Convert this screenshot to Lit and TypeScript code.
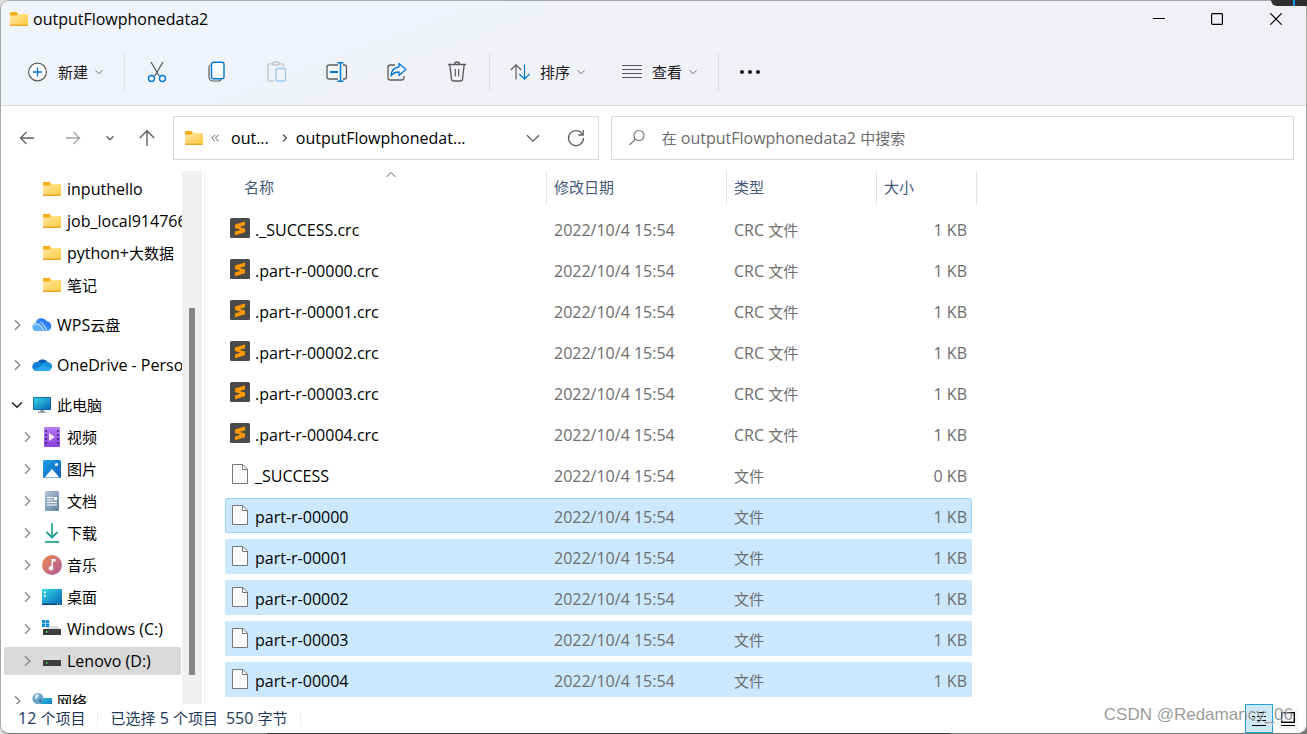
import { LitElement, html, css, svg, nothing, TemplateResult } from "lit";
import { customElement, state } from "lit/decorators.js";
import { classMap } from "lit/directives/class-map.js";

const BLUE = "#0078d4";
const INK = "#5c5c5c";

/** Sets runs of Chinese characters one pixel smaller than the Latin text round them. */
const mixed = (text: string) =>
  text
    .split(/([\u4e00-\u9fff]+)/)
    .filter((run) => run)
    .map((run) => (/[\u4e00-\u9fff]/.test(run) ? html`<span class="cjk">${run}</span>` : run));

const icon = (w: number, h: number, body: unknown, cls = "") =>
  html`<svg class=${cls} width=${w} height=${h} viewBox="0 0 ${w} ${h}" fill="none" aria-hidden="true">${body}</svg>`;

const chevronDown = (w = 10, stroke = "#6a6a6a", sw = 1) =>
  html`<svg width=${w} height=${w} viewBox="0 0 10 10" fill="none" aria-hidden="true">
    <path d="M1.5 3.3 5 6.8 8.5 3.3" stroke=${stroke} stroke-width=${sw} />
  </svg>`;

const gradients = svg`
  <linearGradient id="fold" x1="0" y1="0" x2="1" y2="1"><stop stop-color="#ffe9a6"/><stop offset="1" stop-color="#ffc83a"/></linearGradient>
  <linearGradient id="screen" x1="0" y1="0" x2="1" y2="1"><stop stop-color="#2fd8e6"/><stop offset="1" stop-color="#0a63b8"/></linearGradient>
  <linearGradient id="video" x1="0" y1="0" x2="0" y2="1"><stop stop-color="#b57bf5"/><stop offset="1" stop-color="#8a3fe0"/></linearGradient>
  <linearGradient id="pic" x1="0" y1="0" x2="1" y2="1"><stop stop-color="#1ba0ea"/><stop offset="1" stop-color="#0a5fb4"/></linearGradient>
  <linearGradient id="doc" x1="0" y1="0" x2="1" y2="1"><stop stop-color="#b4c6da"/><stop offset="1" stop-color="#5f7f9f"/></linearGradient>
  <linearGradient id="down" x1="0" y1="0" x2="1" y2="1"><stop stop-color="#3bc585"/><stop offset="1" stop-color="#10939b"/></linearGradient>
  <linearGradient id="music" x1="0" y1="0" x2="1" y2="1"><stop stop-color="#f08a4c"/><stop offset="1" stop-color="#a8589f"/></linearGradient>
  <linearGradient id="wps" x1="0" y1="1" x2="1" y2="0"><stop stop-color="#69b7ff"/><stop offset="1" stop-color="#1163f0"/></linearGradient>`;

const withDefs = (body: unknown) => svg`<defs>${gradients}</defs>${body}`;

const folder = () =>
  icon(18, 16, withDefs(svg`
    <path d="M0 2a1 1 0 0 1 1-1h5.5l1.5 2v3H0z" fill="#f5ad13"/>
    <path d="M0 4.5h6.5L8 3h10v11a1 1 0 0 1-1 1H1a1 1 0 0 1-1-1z" fill="url(#fold)"/>
    <path d="M0 13.5h18v.5a1 1 0 0 1-1 1H1a1 1 0 0 1-1-1z" fill="#e8a72b"/>`));

const drive = (y: number) => svg`
  <path d="M3 ${y}h12l3 4.5H0z" fill="#dcdfe2"/>
  <rect y="${y + 4}" width="18" height="6" rx=".5" fill="#3e3e3e"/>
  <rect x="3" y="${y + 6}" width="1.6" height="1.6" fill="#35e04d"/>`;

const sideIcons: Record<string, () => TemplateResult> = {
  folder,
  wps: () =>
    icon(20, 16, withDefs(svg`
      <path d="M4.500 14a4 4 0 0 1-1-7.900A6.200 6.200 0 0 1 14.800 4.200 5 5 0 0 1 15.500 14z" fill="url(#wps)"/>
      <path d="M1 9.500c4-3 6-2 8 0l4 4.500H4.500C2 14 .5 12 1 9.500z" fill="#5fb1ff"/>
      <path d="M8.500 5.500c2 .5 3 2 4.500 4.500l2 3.800" stroke="#fff" stroke-width=".9"/>
      <path d="M1 8.500c3-2.500 6-1.800 8 .500l3 4.500" stroke="#fff" stroke-width=".9"/>`)),
  onedrive: () =>
    icon(20, 16, svg`
      <path d="M5 6a6 6 0 0 1 10.500-1L11 10z" fill="#0a5cb0"/>
      <path d="M4.500 14A4.500 4.500 0 0 1 5 5c2-.3 4 .5 6 2l4 6z" fill="#0f7fd8"/>
      <path d="M15.500 5a4.500 4.500 0 0 1 4.300 6L14 12 9 7.500C11 5.500 13 4.800 15.500 5z" fill="#1490df"/>
      <path d="M2 13c3-2 6-4 9-5 3 1 6 2 8.600 2.800A3.700 3.700 0 0 1 16 14H4.500A4.500 4.500 0 0 1 2 13z" fill="#2ba7ef"/>`),
  pc: () =>
    icon(20, 18, withDefs(svg`
      <rect x="1" y="1" width="18" height="13" rx=".8" fill="#0f5d93"/>
      <rect x="1.800" y="1.800" width="16.400" height="11.400" fill="url(#screen)"/>
      <path d="M8.500 14h3v1.500h2.500v1.300H6v-1.300h2.500z" fill="#7d8b96"/>`)),
  video: () =>
    icon(18, 20, withDefs(svg`
      <rect x="1" width="16" height="20" rx="1.200" fill="url(#video)"/>
      <path d="M2.500 3h1.500v2H2.500zM2.500 7h1.500v2H2.500zM2.500 11h1.500v2H2.500zM2.500 15h1.500v2H2.500zM14 3h1.500v2H14zM14 7h1.500v2H14zM14 11h1.500v2H14zM14 15h1.500v2H14z" fill="#43206f"/>
      <path d="M6 6v8l6-4z" fill="#f3e9ff"/>`)),
  picture: () =>
    icon(18, 18, withDefs(svg`
      <rect width="18" height="18" rx="1.500" fill="url(#pic)"/>
      <path d="M1.500 17.500 9 9l7.500 8.500z" fill="#f5fbff"/>
      <circle cx="13.500" cy="4.500" r="1.600" fill="#fff"/>`)),
  document: () =>
    icon(18, 20, withDefs(svg`
      <rect x="2" width="14" height="20" rx="1.200" fill="url(#doc)"/>
      <path d="M4 6.500h6M4 9h6M4 11.500h10M4 14h10" stroke="#fff" stroke-width="1.100"/>
      <rect x="11" y="6" width="3" height="3.400" fill="#fff"/>`)),
  download: () =>
    icon(18, 20, withDefs(svg`
      <path d="M8.200 0h1.700v14H8.200z" fill="#21ac8c"/>
      <path d="M3.500 9 9 14.500 14.600 9" stroke="#1aa193" stroke-width="1.800"/>
      <rect x="2" y="18" width="14" height="1.800" fill="url(#down)"/>`)),
  music: () =>
    icon(20, 20, withDefs(svg`
      <circle cx="10" cy="10" r="10" fill="url(#music)"/>
      <path d="M9.500 4h4v2.500H11V13H9.500z" fill="#fff"/><circle cx="9" cy="13.200" r="2.200" fill="#fff"/>`)),
  desktop: () =>
    icon(20, 16, withDefs(svg`
      <rect width="20" height="16" rx="1" fill="url(#screen)"/>
      <rect y="14.500" width="20" height="1.500" fill="#0b4778"/>
      <path d="M2 2.500h1.800v1.800H2zM2 6h1.800v1.800H2z" fill="#fff"/>
      <path d="M15 15h1M17.500 15h1" stroke="#fff"/>`)),
  windows: () =>
    icon(20, 18, svg`
      <path d="M6 6h10l3 4H1z" fill="#dcdfe2"/>
      <rect x="1" y="9" width="18" height="6" rx=".5" fill="#3e3e3e"/>
      <rect x="4" y="11" width="1.600" height="1.600" fill="#35e04d"/>
      <path d="M0 0h3.300v3.200H0zM3.900 0h3.300v3.200H3.900zM0 3.800h3.300V7H0zM3.900 3.800h3.300V7H3.900z" fill="#118fdc"/>`),
  drive: () => icon(18, 12, drive(1)),
  network: () =>
    icon(20, 18, withDefs(svg`
      <rect x="4" y="6" width="16" height="11" fill="url(#screen)"/>
      <circle cx="6" cy="6.500" r="5.500" fill="#6ea3c8"/>
      <path d="M3 3.500c2-2 4-1.500 4 0s-2 1.500-2 3.200S2 6 3 3.500z" fill="#d5e9f5"/>
      <path d="M7.500 7.500c2-.5 3 .5 2 2.500-2 1-2.500-.5-2-2.500z" fill="#2f6f9f"/>`)),
};

const sublime = () =>
  icon(20, 20, svg`
    <rect width="20" height="20" rx="1.500" fill="#4a4a4a"/>
    <path d="M5 6.500 15 3.500v3.800L9.500 9l5.500 1.600v3.600L5 17.200v-3.700l5.500-1.700L5 10.100z" fill="#ff9800"/>`);

const blank = () =>
  icon(16, 20, svg`
    <path d="M.5.5h10.300l4.700 4.700v14.300H.5z" fill="#fafafa" stroke="#767676"/>
    <path d="M10.500.5v5h5" stroke="#767676"/>`);

interface SideItem {
  label: string;
  icon: string;
  level: "leaf" | "top" | "child";
  open?: boolean;
  selected?: boolean;
}

const SIDE: SideItem[] = [
  { label: "inputhello", icon: "folder", level: "leaf" },
  { label: "job_local914766", icon: "folder", level: "leaf" },
  { label: "python+大数据", icon: "folder", level: "leaf" },
  { label: "笔记", icon: "folder", level: "leaf" },
  { label: "WPS云盘", icon: "wps", level: "top" },
  { label: "OneDrive - Perso", icon: "onedrive", level: "top" },
  { label: "此电脑", icon: "pc", level: "top", open: true },
  { label: "视频", icon: "video", level: "child" },
  { label: "图片", icon: "picture", level: "child" },
  { label: "文档", icon: "document", level: "child" },
  { label: "下载", icon: "download", level: "child" },
  { label: "音乐", icon: "music", level: "child" },
  { label: "桌面", icon: "desktop", level: "child" },
  { label: "Windows (C:)", icon: "windows", level: "child" },
  { label: "Lenovo (D:)", icon: "drive", level: "child", selected: true },
  { label: "网络", icon: "network", level: "top" },
];

interface FileRow {
  name: string;
  type: string;
  size: string;
}

const crc = (name: string): FileRow => ({ name, type: "CRC 文件", size: "1 KB" });
const plain = (name: string, size = "1 KB"): FileRow => ({ name, type: "文件", size });

const FILES: FileRow[] = [
  crc("._SUCCESS.crc"),
  crc(".part-r-00000.crc"),
  crc(".part-r-00001.crc"),
  crc(".part-r-00002.crc"),
  crc(".part-r-00003.crc"),
  crc(".part-r-00004.crc"),
  plain("_SUCCESS", "0 KB"),
  plain("part-r-00000"),
  plain("part-r-00001"),
  plain("part-r-00002"),
  plain("part-r-00003"),
  plain("part-r-00004"),
];

const tools: { label: string; body: unknown }[] = [
  {
    label: "剪切",
    body: svg`
      <path d="M5 1 13.200 15M17 1 8.800 15" stroke="${INK}" stroke-width="1.300"/>
      <circle cx="5.500" cy="17.500" r="3" stroke="${BLUE}" stroke-width="1.400"/>
      <circle cx="16.500" cy="17.500" r="3" stroke="${BLUE}" stroke-width="1.400"/>`,
  },
  {
    label: "复制",
    body: svg`
      <path d="M4.500 4C3.300 4.500 3 5.200 3 6.500V16a4 4 0 0 0 4 4h5.500c1.300 0 2-.3 2.500-1.500" stroke="${INK}" stroke-width="1.200"/>
      <rect x="5.500" y="1.200" width="12.500" height="16.500" rx="2" fill="#fafcff" stroke="${BLUE}" stroke-width="1.400"/>`,
  },
  {
    label: "粘贴",
    body: svg`
      <path d="M6.500 2.800H3.500a1.500 1.500 0 0 0-1.500 1.500V18.500A1.500 1.500 0 0 0 3.500 20H8M13 2.800h3a1.500 1.500 0 0 1 1.500 1.500V6" stroke="#bdbdc1" stroke-width="1.200"/>
      <rect x="6.500" y="1.200" width="6.500" height="3" rx="1.500" stroke="#bdbdc1" stroke-width="1.200"/>
      <rect x="10" y="7.500" width="9.500" height="12.500" rx="1.300" stroke="#9dcbee" stroke-width="1.300"/>`,
  },
  {
    label: "重命名",
    body: svg`
      <path d="M12 4H3a2 2 0 0 0-2 2v10a2 2 0 0 0 2 2h9M17 4h1.500a2 2 0 0 1 2 2v10a2 2 0 0 1-2 2H17" stroke="${INK}" stroke-width="1.300"/>
      <path d="M4 11h8" stroke="${BLUE}" stroke-width="2"/>
      <path d="M14.500 2v18M11.500 1.700h6M11.500 20.300h6" stroke="${BLUE}" stroke-width="1.500"/>`,
  },
  {
    label: "共享",
    body: svg`
      <path d="M9 4H4.500A2.500 2.500 0 0 0 2 6.500v10A2.500 2.500 0 0 0 4.500 19h11a2.500 2.500 0 0 0 2.500-2.500V15" stroke="${INK}" stroke-width="1.300"/>
      <path d="M13 2.500 19.800 8.500 13 14.500V11c-4 0-6 1-8 4 .3-5 3-8.500 8-9z" fill="#f7fbff" stroke="${BLUE}" stroke-width="1.300" stroke-linejoin="round"/>`,
  },
  {
    label: "删除",
    body: svg`
      <path d="M2 3.500h18M8.500 3.500a2.500 2.500 0 0 1 5 0M3.800 3.500 5.500 18a2.200 2.200 0 0 0 2.200 2h6.600a2.200 2.200 0 0 0 2.200-2L18.200 3.500" stroke="${INK}" stroke-width="1.400"/>
      <path d="M9.300 8v7.500M12.700 8v7.500" stroke="${INK}" stroke-width="1.200"/>`,
  },
];

@customElement("app-root")
export class AppRoot extends LitElement {
  @state() private selected = new Set([7, 8, 9, 10, 11]);
  @state() private focused = 7;

  static styles = css`
    :host {
      display: block;
      position: relative;
      height: 100vh;
      overflow: hidden;
      box-sizing: border-box;
      background: linear-gradient(90deg, #dcdcda 80%, #777 100%);
      font: 16px/20px "Open Sans", "Noto Sans CJK SC", sans-serif;
      color: #000;
    }
    * {
      box-sizing: border-box;
    }
    svg {
      display: block;
      flex: none;
    }
    button {
      display: flex;
      align-items: center;
      justify-content: center;
      flex: none;
      margin: 0;
      padding: 0;
      border: 0;
      background: none;
      font: inherit;
      color: inherit;
    }
    .cjk {
      font-size: 15px;
    }
    .window {
      display: flex;
      flex-direction: column;
      height: 100%;
      overflow: hidden;
      border: 1px solid #a8a8a8;
      border-bottom-color: #777;
      border-radius: 9px;
      background: #fff;
    }
    .top {
      flex: none;
      border-bottom: 1px solid #dedce3;
      background: linear-gradient(160deg, #f0f3f9 30%, #f3eff7 75%);
    }
    .title {
      display: flex;
      align-items: center;
      height: 36px;
      padding-left: 9px;
    }
    .title h1 {
      flex: 1;
      margin: 0 0 0 5px;
      font: inherit;
    }
    .title button {
      width: 58px;
      height: 36px;
    }
    .title button:last-child {
      width: 60px;
    }
    .tools {
      display: flex;
      align-items: center;
      height: 68px;
      padding: 2px 0 0 27px;
      color: #1b1b1b;
    }
    .tools button {
      height: 40px;
    }
    .menu span {
      margin: 0 6px 0 10px;
    }
    .tool {
      width: 60px;
    }
    .menu + .menu {
      margin-left: 36px;
    }
    .rule {
      width: 1px;
      height: 40px;
      margin: 0 20px;
      background: #e0dfe6;
    }
    .rule.tight-right {
      margin-right: 2px;
    }
    .rule.tight-left {
      margin-left: 2px;
    }
    .nav {
      display: flex;
      flex: none;
      align-items: center;
      padding: 10px 12px 11px 6px;
    }
    .nav > button {
      width: 37px;
      height: 40px;
    }
    .nav > .back {
      width: 40px;
      margin-right: 7px;
    }
    .nav .last {
      margin-right: 8px;
    }
    .box {
      display: flex;
      align-items: center;
      min-width: 0;
      height: 44px;
      border: 1px solid #d9d9d9;
    }
    .address {
      flex: 401 1 0;
      padding: 0 12px 0 11px;
    }
    .address .crumb {
      margin: 0 8px 0 12px;
    }
    .address .last-crumb {
      flex: 1;
      overflow: hidden;
      margin: 0 0 0 3px;
      justify-content: flex-start;
    }
    .address .dir {
      margin-right: 8px;
    }
    .address .drop {
      width: 34px;
      margin-right: 16px;
    }
    .search {
      flex: 650 1 0;
      gap: 16px;
      margin-left: 12px;
      padding: 0 16px;
    }
    .field {
      display: grid;
      flex: 1;
      align-items: center;
      min-width: 0;
    }
    .field > * {
      grid-area: 1 / 1;
    }
    .field input {
      width: 100%;
      min-width: 0;
      padding: 0;
      border: 0;
      outline: 0;
      background: none;
      font: inherit;
      color: #000;
    }
    .hint {
      visibility: hidden;
      overflow: hidden;
      white-space: nowrap;
      color: #6b6b6b;
      pointer-events: none;
    }
    input:placeholder-shown + .hint {
      visibility: visible;
    }
    .body {
      display: flex;
      flex: 1;
      min-height: 0;
    }
    .side {
      display: flex;
      flex: none;
      flex-direction: column;
      gap: 4px;
      width: 181px;
      margin: 0;
      padding: 4px 0 0 3px;
      overflow: hidden;
      list-style: none;
    }
    .side li {
      flex: none;
    }
    .side li.top-level {
      margin-top: 8px;
    }
    .side a {
      display: flex;
      align-items: center;
      height: 28px;
      border-radius: 2px;
      color: inherit;
      text-decoration: none;
      white-space: nowrap;
    }
    .side a.selected {
      margin-right: 1px;
      background: #d9d9d9;
    }
    .twist {
      display: flex;
      flex: none;
      justify-content: center;
      width: 24px;
    }
    .leaf .twist,
    .child .twist {
      margin-left: 11px;
    }
    .glyph {
      display: flex;
      flex: none;
      justify-content: center;
      width: 26px;
      margin-right: 2px;
    }
    .top-level .twist {
      width: 26px;
    }
    .top-level .glyph {
      width: 24px;
      margin-right: 3px;
    }
    .track {
      display: grid;
      flex: none;
      grid-template-rows: 137fr 367fr 29fr;
      justify-content: center;
      width: 20px;
      margin-right: 2px;
      background: #f0f0f0;
    }
    .thumb {
      grid-row: 2;
      width: 6px;
      background: #868686;
    }
    .files {
      flex: 1;
      min-width: 0;
      overflow: hidden;
      padding-left: 20px;
      border-left: 1px solid #f0f0f0;
    }
    table,
    thead,
    tbody {
      display: block;
    }
    tr {
      display: grid;
      grid-template-columns: 322px 180px 150px 95px;
      align-items: center;
      width: 747px;
    }
    thead tr {
      grid-template-columns: 311px 180px 150px 100px;
      width: 752px;
      height: 33px;
      margin-bottom: 7px;
      padding-left: 11px;
    }
    th {
      position: relative;
      height: 33px;
      padding: 0 7px;
      border-right: 1px solid #e2e2e2;
      font-weight: 400;
      line-height: 33px;
      text-align: left;
      color: #44597a;
    }
    th:first-child {
      padding-left: 8px;
    }
    .sort {
      position: absolute;
      top: 0;
      left: calc(50% - 6px);
    }
    tbody {
      display: grid;
      gap: 6px;
    }
    tbody tr {
      height: 35px;
      border-radius: 2px;
    }
    tr.on {
      background: #cce8ff;
    }
    tr.focus {
      outline: 1px solid #99d1ff;
      outline-offset: -1px;
    }
    td {
      padding: 2px 5px 0 7px;
      white-space: nowrap;
      color: #6d6d6d;
    }
    td.name {
      display: flex;
      align-items: center;
      padding-left: 5px;
      color: #000;
    }
    td.name .pic {
      display: flex;
      justify-content: center;
      width: 20px;
      height: 24px;
      margin-right: 5px;
    }
    td.size {
      text-align: right;
    }
    .status {
      display: flex;
      flex: none;
      align-items: center;
      height: 29px;
      padding: 0 8px 0 17px;
      color: #1e395b;
    }
    .status > span {
      padding-bottom: 2px;
    }
    .bar {
      width: 1px;
      height: 14px;
      margin: 0 12px;
      background: #ececec;
    }
    .gap {
      width: 8px;
    }
    .views {
      display: flex;
      align-items: center;
      gap: 5px;
      margin-left: auto;
    }
    .views button {
      width: 20px;
      height: 20px;
      background: #f5f5f5;
    }
    .views .active {
      width: 28px;
      height: 29px;
      border: 1px solid #26a0da;
      background: #cde8f6;
    }
    .mark {
      position: absolute;
      right: 14px;
      bottom: 8px;
      font: 17px/22px "Liberation Sans", sans-serif;
      color: rgba(120, 120, 120, 0.75);
      text-shadow: 1px 1px 0 rgba(255, 255, 255, 0.7);
      pointer-events: none;
    }
    .behind {
      position: absolute;
      top: 0;
      right: 0;
      width: 36px;
      height: 6px;
      border-bottom-left-radius: 6px;
      background: linear-gradient(90deg, #2f2f2f 22px, #0f9bf0 22px, #0f9bf0 24px, #2f2f2f 24px);
    }
    .under {
      position: absolute;
      right: 27.3%;
      bottom: 0;
      left: 20.4%;
      height: 1px;
      background: #3c3c3c;
    }
  `;

  private pick(i: number) {
    this.selected = new Set([i]);
    this.focused = i;
  }

  private twist(item: SideItem) {
    if (item.level === "leaf") return nothing;
    return item.open
      ? icon(12, 12, svg`<path d="M1.200 3.500 6 8.300 10.800 3.500" stroke="#222" stroke-width="1.500"/>`)
      : icon(12, 12, svg`<path d="M4 1.200 8.800 6 4 10.800" stroke="#8a8a8a" stroke-width="1.400"/>`);
  }

  render() {
    return html`
      <div class="window">
        <header class="top">
          <div class="title">
            ${folder()}
            <h1>outputFlowphonedata2</h1>
            <button aria-label="最小化">${icon(12, 12, svg`<path d="M0 5.500h12" stroke="#000"/>`)}</button>
            <button aria-label="最大化">
              ${icon(12, 12, svg`<rect x=".6" y=".6" width="10.800" height="10.800" rx="1" stroke="#000" stroke-width="1.200"/>`)}
            </button>
            <button aria-label="关闭">
              ${icon(12, 12, svg`<path d="M.3.3l11.400 11.400M11.700.3.3 11.700" stroke="#000" stroke-width="1.200"/>`)}
            </button>
          </div>
          <div class="tools">
            <button class="menu">
              ${icon(20, 20, svg`<circle cx="9.500" cy="10" r="8.900" fill="#fafcff" stroke="${INK}" stroke-width="1.200"/>
                <path d="M9.500 5.500v9M5 10h9" stroke="${BLUE}" stroke-width="1.300"/>`)}
              <span class="cjk">新建</span>${chevronDown()}
            </button>
            <div class="rule tight-right"></div>
            ${tools.map((t) => html`<button class="tool" aria-label=${t.label}>${icon(22, 22, t.body)}</button>`)}
            <div class="rule tight-left"></div>
            <button class="menu">
              ${icon(20, 20, svg`<path d="M6 17.500V3M.8 8 6 2.800 11.200 8" stroke="${INK}" stroke-width="1.200"/>
                <path d="M14.500 2.500v14.800M9.300 12l5.200 5.200L19.700 12" stroke="${BLUE}" stroke-width="1.300"/>`)}
              <span class="cjk">排序</span>${chevronDown()}
            </button>
            <button class="menu">
              ${icon(20, 20, svg`<path d="M0 3.500h20M0 7.500h20M0 11.500h20M0 15.500h20" stroke="${INK}" stroke-width="1.100"/>`)}
              <span class="cjk">查看</span>${chevronDown()}
            </button>
            <div class="rule"></div>
            <button aria-label="更多">
              ${icon(22, 8, svg`<g fill="#1a1a1a"><circle cx="3" cy="4" r="2"/><circle cx="11" cy="4" r="2"/><circle cx="19" cy="4" r="2"/></g>`)}
            </button>
          </div>
        </header>

        <nav class="nav">
          <button class="back" aria-label="后退">${icon(16, 16, svg`<path d="M15 8H1.500M7.500 2 1.500 8l6 6" stroke="#606060" stroke-width="1.300"/>`)}</button>
          <button aria-label="前进">${icon(16, 16, svg`<path d="M1 8h13.500M8.500 2l6 6-6 6" stroke="#a0a0a0" stroke-width="1.300"/>`)}</button>
          <button aria-label="最近位置">${chevronDown(10, "#606060", 1.4)}</button>
          <button class="last" aria-label="向上">
            ${icon(18, 18, svg`<path d="M9 17V1.800M1.800 9 9 1.800 16.200 9" stroke="#606060" stroke-width="1.400"/>`)}
          </button>
          <div class="box address">
            <span class="dir">${folder()}</span>
            ${icon(8, 10, svg`<path d="M4 1.800.8 5 4 8.200M7.600 1.800 4.400 5l3.200 3.200" stroke="#555"/>`)}
            <button class="crumb">out...</button>
            ${icon(16, 10, svg`<path d="M6 1.500 9.500 5 6 8.500" stroke="#555" stroke-width="1.300"/>`)}
            <button class="crumb last-crumb">outputFlowphonedat...</button>
            <button class="drop" aria-label="历史记录">
              ${icon(14, 14, svg`<path d="M1 4.200 7 10.200 13 4.200" stroke="#606060" stroke-width="1.300"/>`)}
            </button>
            <button aria-label="刷新">
              ${icon(20, 20, svg`<path d="M16.600 6.500A7.500 7.500 0 1 0 17.500 10" stroke="#606060" stroke-width="1.300"/>
                <path d="M17.200 2v5h-5" stroke="#606060" stroke-width="1.300"/>`)}
            </button>
          </div>
          <label class="box search">
            ${icon(18, 18, svg`<circle cx="11" cy="6.500" r="5" stroke="#707070" stroke-width="1.100"/><path d="M7.300 10.200 1.500 16" stroke="#707070" stroke-width="1.100"/>`)}
            <span class="field">
              <input type="text" placeholder=" " />
              <span class="hint">${mixed("在 outputFlowphonedata2 中搜索")}</span>
            </span>
          </label>
        </nav>

        <div class="body">
          <ul class="side">
            ${SIDE.map(
              (item) => html`<li class=${item.level === "top" ? "top-level" : item.level}>
                <a href="#" class=${classMap({ selected: !!item.selected })}>
                  <span class="twist">${this.twist(item)}</span>
                  <span class="glyph">${sideIcons[item.icon]()}</span>
                  <span>${mixed(item.label)}</span>
                </a>
              </li>`
            )}
          </ul>
          <div class="track"><div class="thumb"></div></div>
          <main class="files">
            <table>
              <thead>
                <tr>
                  <th>
                    <span class="cjk">名称</span>
                    ${icon(12, 8, svg`<path d="M1.500 6 6 1.500 10.500 6" stroke="#606060"/>`, "sort")}
                  </th>
                  <th><span class="cjk">修改日期</span></th>
                  <th><span class="cjk">类型</span></th>
                  <th><span class="cjk">大小</span></th>
                </tr>
              </thead>
              <tbody>
                ${FILES.map(
                  (f, i) => html`<tr
                    class=${classMap({ on: this.selected.has(i), focus: this.focused === i })}
                    @click=${() => this.pick(i)}
                  >
                    <td class="name">
                      <span class="pic">${f.type.startsWith("CRC") ? sublime() : blank()}</span>${f.name}
                    </td>
                    <td>2022/10/4 15:54</td>
                    <td>${mixed(f.type)}</td>
                    <td class="size">${f.size}</td>
                  </tr>`
                )}
              </tbody>
            </table>
          </main>
        </div>

        <footer class="status">
          <span>${mixed("12 个项目")}</span>
          <div class="bar"></div>
          <span>${mixed("已选择 5 个项目")}</span>
          <div class="gap"></div>
          <span>${mixed("550 字节")}</span>
          <div class="bar"></div>
          <div class="views">
            <button class="active" aria-label="详细信息">
              ${icon(14, 14, svg`<path d="M0 .5h3M5 .5h9M0 4.500h3M5 4.500h9M0 8.500h3M5 8.500h9M0 13.500h14" stroke="#000"/>`)}
            </button>
            <button aria-label="大图标">
              ${icon(14, 14, svg`<rect x=".7" y=".7" width="12.600" height="9.600" stroke="#000" stroke-width="1.400"/><path d="M0 13.500h14" stroke="#000"/>`)}
            </button>
          </div>
        </footer>
      </div>
      <div class="behind"></div>
      <div class="under"></div>
      <div class="mark">CSDN @Redamancy_06</div>
    `;
  }
}
